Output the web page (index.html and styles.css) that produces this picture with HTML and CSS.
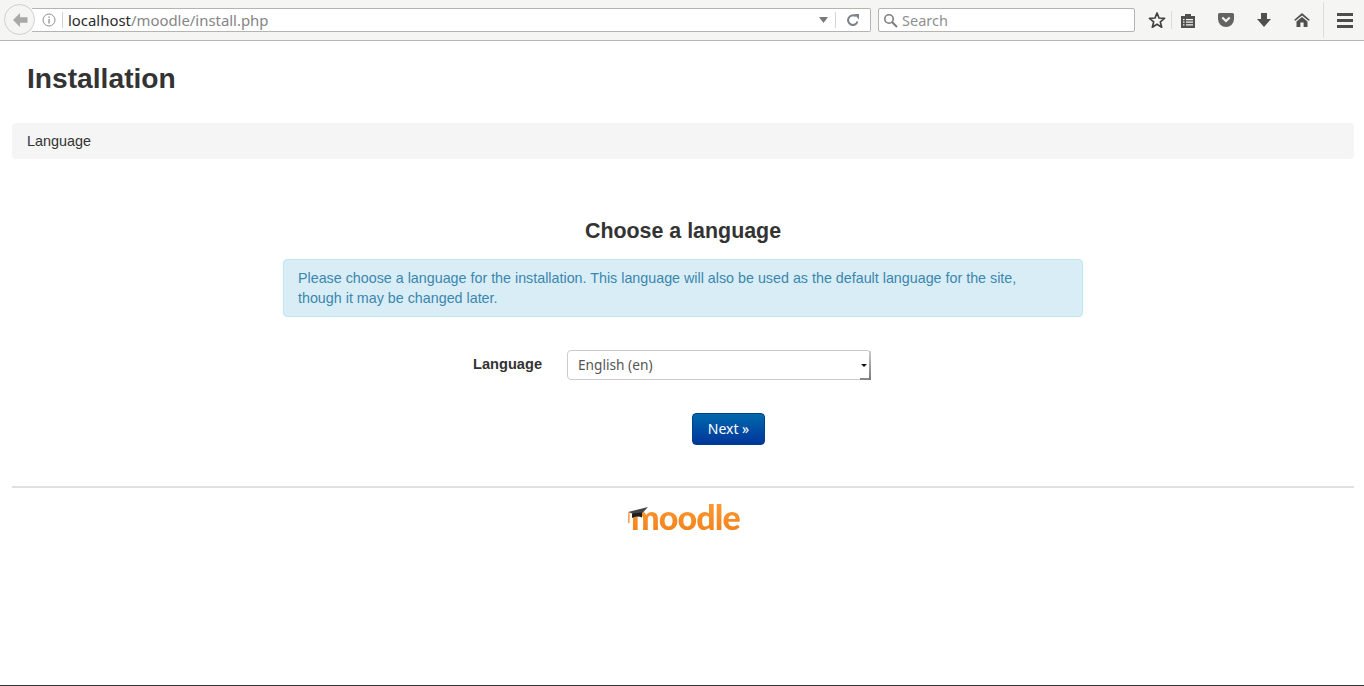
FILE: index.html
```html
<!DOCTYPE html>
<html lang="en">
<head>
<meta charset="utf-8">
<title>Installation</title>
<link rel="stylesheet" href="styles.css">
</head>
<body>
<div class="browser">
  <div class="toolbar">
    <div class="urlwrap">
      <div class="back"><svg width="18" height="18" viewBox="0 0 18 18"><path d="M9 2 L2 9 L9 16 L9 11.8 L16.5 11.8 L16.5 6.2 L9 6.2 Z" fill="#a9aaa8"/></svg></div>
      <div class="urlbar">
        <svg class="info" width="14" height="14" viewBox="0 0 14 14"><circle cx="7" cy="7" r="6" fill="none" stroke="#8f8f8f" stroke-width="1"/><rect x="6.4" y="6" width="1.3" height="4.5" fill="#8f8f8f"/><rect x="6.4" y="3.5" width="1.3" height="1.4" fill="#8f8f8f"/></svg>
        <span class="sep"></span>
        <span class="url"><span class="host">localhost</span>/moodle/install.php</span>
        <svg class="drop" width="9" height="6" viewBox="0 0 9 6"><path d="M0 0H9L4.5 6Z" fill="#77797b"/></svg>
        <span class="sep2"></span>
        <svg class="reload" width="14" height="14" viewBox="0 0 14 14"><path d="M11.5 8.5 A4.8 4.8 0 1 1 9.8 3.3" fill="none" stroke="#7b8289" stroke-width="2"/><path d="M8 1 L13 1 L13 6.5 Z" fill="#7b8289"/></svg>
      </div>
    </div>
    <div class="searchbar">
      <svg width="15" height="15" viewBox="0 0 15 15"><circle cx="6" cy="6" r="4.2" fill="none" stroke="#7d7d7d" stroke-width="1.6"/><path d="M9.2 9.2 L14 14" stroke="#7d7d7d" stroke-width="2"/></svg>
      <span class="search-text">Search</span>
    </div>
    <div class="tools">
      <svg class="t-star" width="18" height="18" viewBox="0 0 18 18"><path d="M9 2 L11 7 L16.5 7.4 L12.3 10.9 L13.7 16.2 L9 13.3 L4.3 16.2 L5.7 10.9 L1.5 7.4 L7 7 Z" fill="none" stroke="#424242" stroke-width="1.7" stroke-linejoin="round"/></svg>
      <span class="tsep"></span>
      <svg class="t-list" width="16" height="17" viewBox="0 0 16 17"><path d="M1 4 H5 V2 H11 V4 H15 V16 H1 Z" fill="#505050"/><path d="M3 7H4.5V8.2H3ZM6 7H13V8.2H6ZM3 9.6H4.5V10.8H3ZM6 9.6H13V10.8H6ZM3 12.2H4.5V13.4H3ZM6 12.2H13V13.4H6Z" fill="#f5f5f3"/></svg>
      <svg class="t-pocket" width="18" height="16" viewBox="0 0 18 16"><path d="M2.5 1 H15.5 A1.5 1.5 0 0 1 17 2.5 V7 A8 8 0 0 1 1 7 V2.5 A1.5 1.5 0 0 1 2.5 1 Z" fill="#636363"/><path d="M5.3 5.5 L9 9 L12.7 5.5" fill="none" stroke="#f5f5f3" stroke-width="2.2"/></svg>
      <svg class="t-down" width="16" height="16" viewBox="0 0 16 16"><path d="M5 1 H11 V7 H15 L8 15 L1 7 H5 Z" fill="#505050"/></svg>
      <svg class="t-home" width="18" height="16" viewBox="0 0 18 16"><path d="M9 1 L17 8 L15.5 8.8 L9 3.6 L2.5 8.8 L1 8 Z" fill="#505050"/><path d="M9 5 L14.5 9.5 V15 H10.6 V10.5 H7.4 V15 H3.5 V9.5 Z" fill="#505050"/></svg>
      <span class="tsep tsep-menu"></span>
      <div class="menu"><span></span><span></span><span></span></div>
    </div>
  </div>
  <div class="page">
    <header class="page-head"><h1>Installation</h1></header>
    <nav class="crumb">Language</nav>
    <main class="content">
      <h2>Choose a language</h2>
      <div class="notice">Please choose a language for the installation. This language will also be used as the default language for the site, though it may be changed later.</div>
      <div class="form-row">
        <label class="lang-label" for="lang">Language</label>
        <div class="select" id="lang"><span>English (en)</span><i class="arrow"></i></div>
      </div>
      <div class="btn-row"><button class="next">Next »</button></div>
    </main>
    <footer class="foot">
      <div class="logo">
        <span class="logo-text">moodle</span>
        <svg class="cap" width="24" height="20" viewBox="0 0 24 20"><path d="M0 5 L20 0 L15 5.5 L8 8 Z" fill="#454545"/><path d="M4 6.5 V11 C8 9 11 9 14 10.5 V5.5 Z" fill="#1f1f1f"/><path d="M1 5.5 L0.8 16" stroke="#f98012" stroke-width="1.2"/></svg>
      </div>
    </footer>
  </div>
</div>
</body>
</html>
```
FILE: styles.css
```css
* { box-sizing: border-box; }
html, body { margin: 0; padding: 0; height: 100%; background: #fff; overflow: hidden; }
body { font-family: "Liberation Sans", Arial, sans-serif; color: #333; }
.browser { height: 686px; display: flex; flex-direction: column; border-bottom: 1px solid #333; }
.toolbar { height: 41px; flex: none; background: #f5f5f3; border-bottom: 1px solid #b5b5b3; display: flex; align-items: flex-start; position: relative; }
.urlwrap { position: relative; margin-left: 32px; margin-top: 8px; width: 839px; }
.back { position: absolute; left: -28px; top: -4px; width: 31px; height: 31px; border-radius: 50%; background: #f5f5f3; border: 1px solid #cfcfcd; display: flex; align-items: center; justify-content: center; z-index: 1; }
.urlbar { height: 24px; background: #fff; border: 1px solid #b4b4b2; border-left: 0; border-radius: 0 2px 2px 0; display: flex; align-items: center; padding-left: 10px; }
.sep { width: 1px; height: 16px; background: #cfcfcf; margin-left: 6px; }
.url { font-family: "Noto Sans", sans-serif; font-size: 14.9px; color: #858585; margin-left: 5px; flex: 1; white-space: nowrap; }
.host { color: #2b2b2b; }
.drop { margin-right: 7px; }
.sep2 { width: 1px; height: 16px; background: #d5d5d5; margin-right: 10px; }
.reload { margin-right: 10px; }
.searchbar { margin-left: 7px; margin-top: 8px; width: 257px; height: 24px; background: #fff; border: 1px solid #b4b4b2; border-radius: 2px; display: flex; align-items: center; padding-left: 4px; gap: 4px; }
.search-text { font-family: "Noto Sans", sans-serif; font-size: 14.5px; color: #8f8f8f; }
.tools { display: flex; align-items: center; height: 40px; margin-left: 13px; flex: 1; }
.tsep { width: 1px; height: 18px; background: #dcdcda; margin-left: 5px; }
.t-list { margin-left: 8px; }
.t-pocket { margin-left: 21px; }
.t-down { margin-left: 21px; }
.t-home { margin-left: 21px; }
.tsep-menu { height: 36px; margin-left: 12px; }
.menu { margin-left: 13px; width: 16px; display: flex; flex-direction: column; gap: 3px; }
.menu span { display: block; height: 3px; background: #4d4d4d; }
.page { flex: 1; padding: 0 10px 0 12px; }
.page-head { height: 82px; padding: 19px 0 0 15px; }
h1 { margin: 0; font-size: 28.2px; line-height: 36px; font-weight: bold; color: #333; }
.crumb { height: 36px; background: #f5f5f5; border-radius: 4px; padding: 0 15px 1px; display: flex; align-items: center; font-size: 14.4px; color: #333; }
.content { width: 800px; margin: 0 auto; }
h2 { margin: 58px 0 0; font-size: 21.4px; line-height: 28px; font-weight: bold; text-align: center; color: #333; }
.notice { margin-top: 14px; height: 58px; background: #d9edf7; border: 1px solid #bce8f1; border-radius: 4px; padding: 8px 35px 8px 14px; font-size: 14.3px; line-height: 20px; color: #3a87ad; }
.form-row { display: flex; margin-top: 33px; height: 30px; align-items: center; }
.lang-label { width: 259px; text-align: right; font-size: 14.6px; font-weight: bold; color: #333; margin-top: -2px; }
.select { margin-left: 25px; width: 304px; height: 30px; background: #fff; border: 1px solid #ccc; border-radius: 4px; display: flex; align-items: center; padding-left: 10px; font-family: "Noto Sans", sans-serif; font-size: 13.7px; color: #555; position: relative; }
.select span { flex: 1; margin-top: -1px; }
.select::after { content: ""; position: absolute; right: -1px; top: 0; bottom: -1px; width: 2px; background: linear-gradient(#ccc, #777); }
.select::before { content: ""; position: absolute; right: 0; bottom: -1px; width: 10px; height: 2px; background: #888; }
.arrow { position: absolute; right: 3px; top: 13px; width: 0; height: 0; border-left: 3px solid transparent; border-right: 3px solid transparent; border-top: 3px solid #111; }
.btn-row { display: flex; margin-top: 33px; padding-left: 409px; }
.next { width: 73px; height: 32px; border: 1px solid #00408a; border-radius: 4px; background: linear-gradient(#0068ac, #00369b); color: #fff; font-family: "Noto Sans", sans-serif; font-size: 14px; padding: 0 0 2px; }
.foot { margin-top: 41px; border-top: 2px solid #e0e0e0; display: flex; justify-content: center; padding-top: 11px; }
.logo { position: relative; width: 112px; height: 34px; }
.cap { position: absolute; left: 1px; top: 8px; }
.logo-text { position: absolute; left: 4px; top: -4px; font-family: Lato, "Noto Sans", sans-serif; font-size: 34px; line-height: 44px; font-weight: 900; background: linear-gradient(#fca03a, #f27c14); color: #f98012; letter-spacing: -0.9px; -webkit-background-clip: text; background-clip: text; -webkit-text-fill-color: transparent; }
```
